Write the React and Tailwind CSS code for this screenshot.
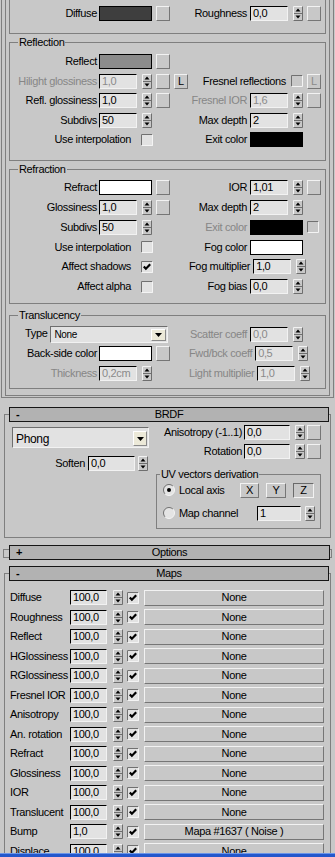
import React from "react";

const FONT = "font-['Liberation_Sans',Arial,sans-serif]";

function Lbl({ children, dim, className = "" }) {
  return (
    <span className={`whitespace-nowrap ${dim ? "text-[#868686]" : "text-black"} ${className}`}>
      {children}
    </span>
  );
}

function Field({ value, dim, className = "w-[38px] h-[15px]" }) {
  return (
    <div
      className={`shrink-0 ${className} flex items-center bg-[#e2e2e2] border border-t-black border-l-black border-r-[#f2f2f2] border-b-[#f2f2f2] pl-[2px] ${dim ? "text-[#8a8a8a]" : "text-black"}`}
    >
      {value}
    </div>
  );
}

function Spin({ className = "" }) {
  return (
    <svg width="10" height="15" viewBox="0 0 10 15" className={`shrink-0 ${className}`}>
      <rect width="10" height="15" fill="#c8c8c8" />
      <path d="M0.5 14.5V0.5H9.5" fill="none" stroke="#f2f2f2" />
      <path d="M0.5 14.5H9.5V0.5" fill="none" stroke="#6e6e6e" />
      <path d="M1 7.5H9" stroke="#6e6e6e" />
      <path d="M5 2.5L7.5 5.5H2.5Z" fill="#000" />
      <path d="M2.5 9.5H7.5L5 12.5Z" fill="#000" />
    </svg>
  );
}

function Btn({ children, dim, down, className = "w-[14px] h-[15px]" }) {
  const edge = down
    ? "border-t-[#6a6a6a] border-l-[#6a6a6a] border-r-[#f2f2f2] border-b-[#f2f2f2]"
    : "border-t-[#f2f2f2] border-l-[#f2f2f2] border-r-[#767676] border-b-[#767676]";
  return (
    <div
      className={`shrink-0 ${className} flex items-center justify-center border ${edge} ${dim ? "text-[#8a8a8a]" : "text-black"}`}
    >
      {children}
    </div>
  );
}

function Swatch({ className = "bg-black" }) {
  return <div className={`shrink-0 w-[53px] h-[15px] border border-black ${className}`} />;
}

function Check({ on, dim, className = "" }) {
  return (
    <svg width="12" height="12" viewBox="0 0 12 12" className={`shrink-0 ${className}`}>
      <rect width="12" height="12" fill={dim ? "#c8c8c8" : "#e2e2e2"} />
      <path d="M0.5 11.5V0.5H11.5" fill="none" stroke="#707070" />
      <path d="M0.5 11.5H11.5V0.5" fill="none" stroke="#f4f4f4" />
      {on && <path d="M2.8 5.4L4.9 7.7L9.2 3.3" fill="none" stroke="#000" strokeWidth="2.2" />}
    </svg>
  );
}

function Radio({ on }) {
  return (
    <svg width="12" height="12" viewBox="0 0 12 12" className="shrink-0">
      <circle cx="6" cy="6" r="5.5" fill="#e4e4e4" />
      <path d="M2.1 9.9A5.5 5.5 0 0 1 9.9 2.1" stroke="#707070" fill="none" />
      <path d="M9.9 2.1A5.5 5.5 0 0 1 2.1 9.9" stroke="#f4f4f4" fill="none" />
      {on && <circle cx="6" cy="6" r="2" fill="#000" />}
    </svg>
  );
}

function Arrow() {
  return (
    <svg width="7" height="4" viewBox="0 0 7 4">
      <path d="M0 0H7L3.5 4Z" fill="#000" />
    </svg>
  );
}

function Drop({ value, className, btnClass }) {
  return (
    <div
      className={`shrink-0 flex items-end bg-[#e2e2e2] border border-t-[#6e6e6e] border-l-[#6e6e6e] border-r-[#f2f2f2] border-b-[#f2f2f2] ${className}`}
    >
      <span className="flex-1 pl-[3px] pb-[2px]">{value}</span>
      <div
        className={`${btnClass} mb-[1px] mr-[1px] bg-[#ece9d8] border border-t-white border-l-white border-r-[#8a8a8a] border-b-[#8a8a8a] flex items-center justify-center`}
      >
        <Arrow />
      </div>
    </div>
  );
}

/* a row inside the material groups: left half ends at x 189, right at 324 */
function Row({ h = "h-[19.5px]", left, right }) {
  return (
    <div className={`flex items-center ${h}`}>
      <div className="flex w-[179px] items-center">{left}</div>
      <div className="flex flex-1 min-w-0 items-center">{right}</div>
    </div>
  );
}

const L = {
  swatch: (label, color, dim) => (
    <>
      <Lbl dim={dim} className="flex-1 text-right mr-[2px]">{label}</Lbl>
      <div className="flex w-[90px] items-center">
        <Swatch className={color} />
        <Btn className="ml-[4px] w-[14px] h-[15px]" />
      </div>
    </>
  ),
  spin: (label, value, { dim, btn, lbtn } = {}) => (
    <>
      <Lbl dim={dim} className="flex-1 text-right mr-[2px]">{label}</Lbl>
      <div className="flex w-[90px] items-center">
        <Field value={value} dim={dim} />
        <Spin className="ml-[5px]" />
        {btn && <Btn className="ml-[4px] w-[14px] h-[15px]" />}
        {lbtn && <Btn className="ml-[4px] w-[14px] h-[15px]">L</Btn>}
      </div>
    </>
  ),
  check: (label, on) => (
    <>
      <Lbl className="flex-1 text-right mr-[10px]">{label}</Lbl>
      <Check on={on} />
      <div className="w-[36px]" />
    </>
  ),
};

const R = {
  spin: (label, value, { dim, btn } = {}) => (
    <>
      <Lbl dim={dim} className="flex-1 text-right mr-[3px]">{label}</Lbl>
      <div className="flex w-[75px] shrink-0 items-center">
        <Field value={value} dim={dim} />
        <Spin className="ml-[5px]" />
        {btn && <Btn className="ml-[4px] w-[14px] h-[15px]" />}
      </div>
    </>
  ),
  swatch: (label, color, { dim, check } = {}) => (
    <>
      <Lbl dim={dim} className="flex-1 text-right mr-[3px]">{label}</Lbl>
      <div className="flex w-[75px] shrink-0 items-center">
        <Swatch className={color} />
        {check && <Check dim className="ml-[4px]" />}
      </div>
    </>
  ),
};

function Group({ title, className, children }) {
  return (
    <fieldset className={`mx-[3px] min-w-0 border border-[#7f7f7f] ${className}`}>
      <legend className="ml-[8px] px-[1px] leading-[14px]">{title}</legend>
      {children}
    </fieldset>
  );
}

function MaterialRollout() {
  return (
    <div className="shrink-0 mx-[1px] h-[398px] border-x border-b border-[#7f7f7f]">
      <div className="mx-[3px] h-[396px] border-x border-b border-[#7f7f7f]">
        <div className="mx-[3px] h-[34px] border-x border-b border-[#7f7f7f] pt-[6px]">
          <Row
            h="h-[15px]"
            left={L.swatch("Diffuse", "bg-[#3e3e3e]")}
            right={R.spin("Roughness", "0,0", { btn: true })}
          />
        </div>

        <Group title="Reflection" className="mt-[1px] h-[126px]">
          <div className="pt-[3px]">
            <Row left={L.swatch("Reflect", "bg-[#8b8b8b]")} right={null} />
            <Row
              left={L.spin("Hilight glossiness", "1,0", { dim: true, btn: true, lbtn: true })}
              right={
                <>
                  <Lbl className="flex-1 text-right mr-[5px]">Fresnel reflections</Lbl>
                  <Check dim />
                  <Btn dim className="ml-[4px] w-[14px] h-[15px]">L</Btn>
                  <div className="w-[4px] shrink-0" />
                </>
              }
            />
            <Row
              left={L.spin("Refl. glossiness", "1,0", { btn: true })}
              right={R.spin("Fresnel IOR", "1,6", { dim: true, btn: true })}
            />
            <Row left={L.spin("Subdivs", "50")} right={R.spin("Max depth", "2")} />
            <Row left={L.check("Use interpolation")} right={R.swatch("Exit color", "bg-black")} />
          </div>
        </Group>

        <Group title="Refraction" className="mt-[1px] h-[142px]">
          <div className="pt-[2px]">
            <Row h="h-[19.75px]" left={L.swatch("Refract", "bg-white")} right={R.spin("IOR", "1,01", { btn: true })} />
            <Row h="h-[19.75px]" left={L.spin("Glossiness", "1,0", { btn: true })} right={R.spin("Max depth", "2")} />
            <Row
              h="h-[19.75px]"
              left={L.spin("Subdivs", "50")}
              right={R.swatch("Exit color", "bg-black", { dim: true, check: true })}
            />
            <Row h="h-[19.75px]" left={L.check("Use interpolation")} right={R.swatch("Fog color", "bg-white")} />
            <Row h="h-[19.75px]" left={L.check("Affect shadows", true)} right={R.spin("Fog multiplier", "1,0")} />
            <Row h="h-[19.75px]" left={L.check("Affect alpha")} right={R.spin("Fog bias", "0,0")} />
          </div>
        </Group>

        <Group title="Translucency" className="mt-[4px] h-[81px]">
          <div className="pt-[2px]">
            <Row
              h="h-[20px]"
              left={
                <>
                  <Lbl className="ml-[15px] mb-[2px]">Type</Lbl>
                  <Drop value="None" className="ml-[3px] w-[118px] h-[17px] text-[10px]" btnClass="w-[15px] h-[12px]" />
                </>
              }
              right={R.spin("Scatter coeff", "0,0", { dim: true })}
            />
            <Row h="h-[19.5px]" left={L.swatch("Back-side color", "bg-white")} right={R.spin("Fwd/bck coeff", "0,5", { dim: true })} />
            <Row h="h-[20px]" left={L.spin("Thickness", "0,2cm", { dim: true })} right={R.spin("Light multiplier", "1,0", { dim: true })} />
          </div>
        </Group>
      </div>
    </div>
  );
}

function Bar({ sign, title }) {
  return (
    <div className="ml-[4px] mr-[1px] h-[15px] flex items-center bg-[#b2b2b2] border border-[#161616]">
      <span className="w-[20px] pl-[6px] font-bold">{sign}</span>
      <span className="flex-1 text-center pr-[20px]">{title}</span>
    </div>
  );
}

function BrdfRollout() {
  return (
    <div className="shrink-0 mt-[16px] mx-[4px] h-[124px] border border-[#7f7f7f]">
      <div className="-mt-[8px]">
        <Bar sign="-" title="BRDF" />
      </div>
      <div className="flex pt-[5px]">
        <div className="ml-[7px] w-[137px]">
          <Drop value="Phong" className="w-[137px] h-[21px] text-[12px]" btnClass="w-[14px] h-[15px]" />
          <div className="flex items-center h-[15px] mt-[8px]">
            <Lbl className="flex-1 text-right mr-[3px]">Soften</Lbl>
            <Field value="0,0" className="w-[47px] h-[15px]" />
            <Spin className="ml-[3px]" />
            <div className="w-[1px]" />
          </div>
        </div>
        <div className="ml-[7px] w-[165px]">
          <div className="flex items-center h-[15px] -mt-[2px]">
            <Lbl className="flex-1 text-right mr-[2px]">Anisotropy (-1..1)</Lbl>
            <Field value="0,0" className="w-[46px] h-[15px]" />
            <Spin className="ml-[5px]" />
            <Btn className="ml-[2px] w-[14px] h-[15px]" />
          </div>
          <div className="flex items-center h-[15px] mt-[4px]">
            <Lbl className="flex-1 text-right mr-[2px]">Rotation</Lbl>
            <Field value="0,0" className="w-[46px] h-[15px]" />
            <Spin className="ml-[5px]" />
            <Btn className="ml-[2px] w-[14px] h-[15px]" />
          </div>
          <fieldset className="mt-[8px] h-[62px] min-w-0 border border-[#7f7f7f]">
            <legend className="ml-[3px] px-[1px] leading-[14px]">UV vectors derivation</legend>
            <div className="flex items-center h-[16px] mt-[1px] pl-[6px]">
              <Radio on />
              <Lbl className="ml-[4px] w-[61px]">Local axis</Lbl>
              <Btn className="w-[19px] h-[15px]">X</Btn>
              <Btn className="ml-[7px] w-[20px] h-[15px]">Y</Btn>
              <Btn down className="ml-[7px] w-[21px] h-[15px]">Z</Btn>
            </div>
            <div className="flex items-center h-[16px] mt-[7px] pl-[6px]">
              <Radio />
              <Lbl className="ml-[4px] w-[78px]">Map channel</Lbl>
              <Field value="1" className="w-[44px] h-[15px]" />
              <Spin className="ml-[4px]" />
            </div>
          </fieldset>
        </div>
      </div>
    </div>
  );
}

function OptionsRollout() {
  return (
    <div className="shrink-0 mt-[11px] mx-[3px] h-[9px] border border-[#7f7f7f]">
      <div className="-mt-[5px] ml-[1px]">
        <Bar sign="+" title="Options" />
      </div>
    </div>
  );
}

function MapRow({ name, amt = "100,0", map = "None" }) {
  return (
    <div className="flex items-center h-[19.5px] shrink-0">
      <span className="w-[65px] pl-[5px] whitespace-nowrap">{name}</span>
      <Field value={amt} className="w-[37px] h-[15px]" />
      <Spin className="ml-[6px]" />
      <Check on className="ml-[4px]" />
      <Btn className="ml-[5px] w-[180px] h-[16px]">{map}</Btn>
    </div>
  );
}

const maps = [
  ["Diffuse"],
  ["Roughness"],
  ["Reflect"],
  ["HGlossiness"],
  ["RGlossiness"],
  ["Fresnel IOR"],
  ["Anisotropy"],
  ["An. rotation"],
  ["Refract"],
  ["Glossiness"],
  ["IOR"],
  ["Translucent"],
  ["Bump", "1,0", "Mapa #1637  ( Noise )"],
  ["Displace"],
];

function MapsRollout() {
  return (
    <div className="mt-[15px] mx-[4px] flex-1 min-h-0 border-x border-t border-[#7f7f7f] flex flex-col">
      <div className="-mt-[8px] shrink-0">
        <Bar sign="-" title="Maps" />
      </div>
      <div className="pt-[7px] flex-1 min-h-0 overflow-hidden">
        {maps.map(([name, amt, map]) => (
          <MapRow key={name} name={name} amt={amt} map={map} />
        ))}
      </div>
    </div>
  );
}

export default function App() {
  return (
    <div className={`w-[335px] h-[857px] overflow-hidden bg-[#c8c8c8] text-[11px] tracking-[-0.35px] leading-none text-black ${FONT} flex flex-col`}>
      <MaterialRollout />
      <BrdfRollout />
      <OptionsRollout />
      <MapsRollout />
      <div className="h-[4px] shrink-0 bg-[#2357cc] border-t border-[#6a94e8]" />
    </div>
  );
}
